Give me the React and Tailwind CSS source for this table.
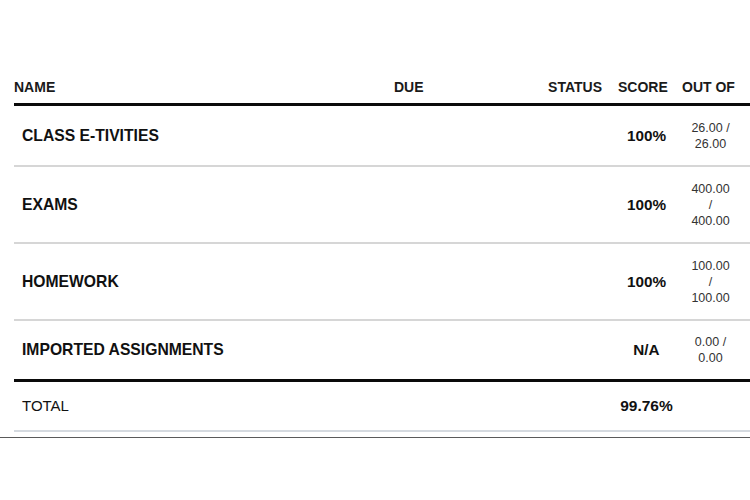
import React from "react";

const rows = [
  { name: "CLASS E-TIVITIES", score: "100%", out: ["26.00 /", "26.00"], h: "h-[61px] border-b-2 border-[#d6d6d6]" },
  { name: "EXAMS", score: "100%", out: ["400.00", "/", "400.00"], h: "h-[77px] border-b-2 border-[#d6d6d6]" },
  { name: "HOMEWORK", score: "100%", out: ["100.00", "/", "100.00"], h: "h-[77px] border-b-2 border-[#d6d6d6]" },
  { name: "IMPORTED ASSIGNMENTS", score: "N/A", out: ["0.00 /", "0.00"], h: "h-[58px]" },
];

const cols = "grid grid-cols-[380px_146px_72px_69px_69px]";

export default function App() {
  return (
    <div className="w-[750px] h-[500px] bg-white overflow-hidden text-[#111]" style={{ fontFamily: '"Liberation Sans", Arial, sans-serif' }}>
      <div className="pt-[71px] ml-[14px]">
        <div className={`${cols} pt-[8px] pb-[8px] border-b-[3px] border-[#0a0a0a] text-[14px] leading-[16px] font-bold text-[#1a1a1a]`}>
          <div>NAME</div>
          <div>DUE</div>
          <div className="text-right pr-[10px]">STATUS</div>
          <div className="pl-[6px]">SCORE</div>
          <div className="pl-[1px] whitespace-nowrap">OUT OF</div>
        </div>
        {rows.map((r) => (
          <div key={r.name} className={`${cols} items-center ${r.h}`}>
            <div className="pl-[8px] text-[15.7px] font-bold leading-[18px]">{r.name}</div>
            <div />
            <div />
            <div className="text-center text-[15.3px] font-bold leading-[18px]">{r.score}</div>
            <div className="pr-[10px] text-center text-[12.5px] leading-[16px] text-[#333]">
              {r.out.map((l, i) => (
                <div key={i}>{l}</div>
              ))}
            </div>
          </div>
        ))}
        <div className={`${cols} items-center h-[53px] border-t-[3px] border-[#0a0a0a] border-b-2 border-b-[#d5dae0]`}>
          <div className="pl-[8px] text-[15px] leading-[18px]">TOTAL</div>
          <div />
          <div />
          <div className="text-center text-[15.5px] font-bold leading-[18px]">99.76%</div>
          <div />
        </div>
      </div>
      <div className="mt-[5px] h-px bg-[#5a5a5a] w-full" />
    </div>
  );
}
